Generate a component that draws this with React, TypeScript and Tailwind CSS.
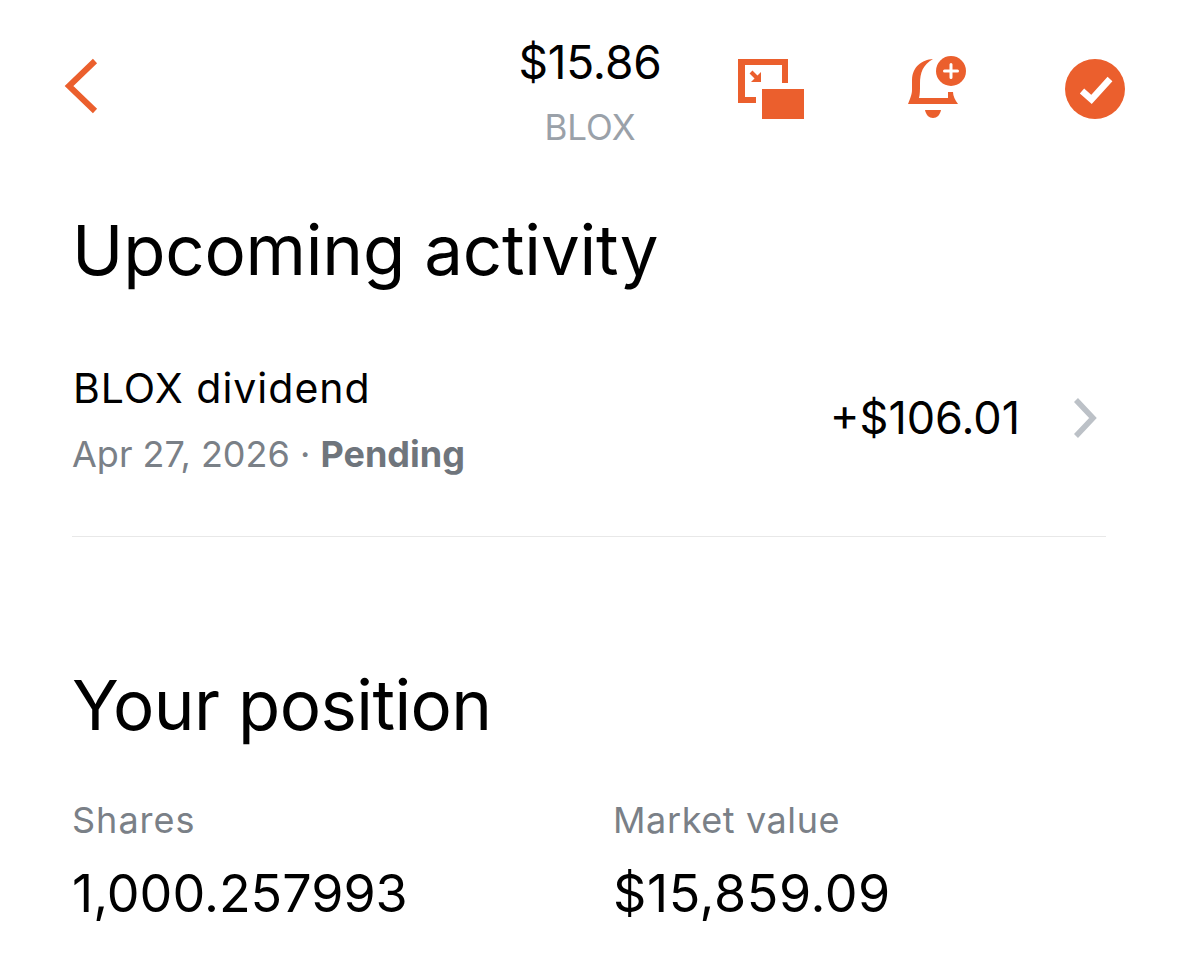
export default function App() {
  const orange = "#eb5f2d";
  return (
    <div className="w-[1179px] h-[961px] overflow-hidden bg-white text-black" style={{ fontFamily: "Inter, 'Liberation Sans', sans-serif" }}>
      <header className="relative h-[160px]">
        <svg className="absolute left-[60px] top-[54px]" width="44" height="64" viewBox="0 0 44 64" fill="none">
          <path d="M35 7 L9 32 L35 57" stroke={orange} strokeWidth="6" />
        </svg>
        <div className="absolute left-[440px] w-[300px] top-[37px] flex flex-col items-center">
          <div className="text-[46px] leading-[50px] tracking-[-0.2px]">$15.86</div>
          <div className="text-[35px] leading-[42px] mt-[19px] text-[#9aa1a9]">BLOX</div>
        </div>
        <svg className="absolute left-[738px] top-[58px]" width="68" height="62" viewBox="0 0 68 62">
          <path d="M0 1 H50 V25 H44 V7 H7 V39 H18 V45 H0 Z" fill={orange} />
          <path d="M13 14 L20 21" stroke={orange} strokeWidth="4" fill="none" />
          <path d="M23 14 V24 H13 Z" fill={orange} />
          <rect x="24" y="31" width="42" height="30" fill={orange} />
        </svg>
        <svg className="absolute left-[906px] top-[54px]" width="64" height="68" viewBox="0 0 64 68">
          <path d="M27 5 C16 6 6.5 12 6 26 V36 C6 39 5 43 2 50 H52 C49 46 47 42 47 38 H42 V44 H13 C14 40 14 36 14 30 C14 18 17 11 27 5 Z" fill={orange} />
          <path d="M19 56 H35 C34 61 31 64 27 64 C23 64 20 61 19 56 Z" fill={orange} />
          <circle cx="45" cy="17" r="15" fill={orange} />
          <path d="M45 10.5 V23.5 M38.5 17 H51.5" stroke="white" strokeWidth="3" strokeLinecap="round" />
        </svg>
        <svg className="absolute left-[1064px] top-[58px]" width="62" height="62" viewBox="0 0 62 62">
          <circle cx="31" cy="31" r="30" fill={orange} />
          <path d="M18 33 L27.5 41.5 L46 21" stroke="white" strokeWidth="6.5" fill="none" />
        </svg>
      </header>

      <main className="px-[72px]">
        <h1 className="text-[69px] leading-[84px] tracking-[-0.2px] font-normal mt-[48px]">Upcoming activity</h1>

        <div className="flex items-center mt-[68px] w-[1034px] h-[124px] pb-[8px]">
          <div className="flex-1 mt-[3px]">
            <div className="text-[41px] leading-[50px] tracking-[1px] ml-px">BLOX dividend</div>
            <div className="text-[36px] leading-[44px] mt-[19px] text-[#7a8087]">
              Apr 27, 2026 · <span className="font-bold text-[#6f757c]">Pending</span>
            </div>
          </div>
          <div className="text-[45px] leading-[50px] mr-[52px]">+$106.01</div>
          <svg className="mr-[8px]" width="26" height="42" viewBox="0 0 26 42" fill="none">
            <path d="M4 3 L21 21 L4 39" stroke="#bcc1c7" strokeWidth="5.5" />
          </svg>
        </div>
        <div className="w-[1034px] h-px bg-[#e8e8e8] mt-[52px]" />

        <h1 className="text-[69px] leading-[84px] tracking-[-0.6px] font-normal mt-[126px]">Your position</h1>

        <div className="grid grid-cols-[541px_1fr] mt-[51px]">
          <div>
            <div className="text-[36px] leading-[44px] tracking-[1px] text-[#7a8087]">Shares</div>
            <div className="text-[52px] leading-[56px] mt-[24px]">1,000.257993</div>
          </div>
          <div>
            <div className="text-[36px] leading-[44px] tracking-[0.6px] text-[#7a8087]">Market value</div>
            <div className="text-[52px] leading-[56px] tracking-[0.6px] mt-[24px]">$15,859.09</div>
          </div>
        </div>
      </main>
    </div>
  );
}
